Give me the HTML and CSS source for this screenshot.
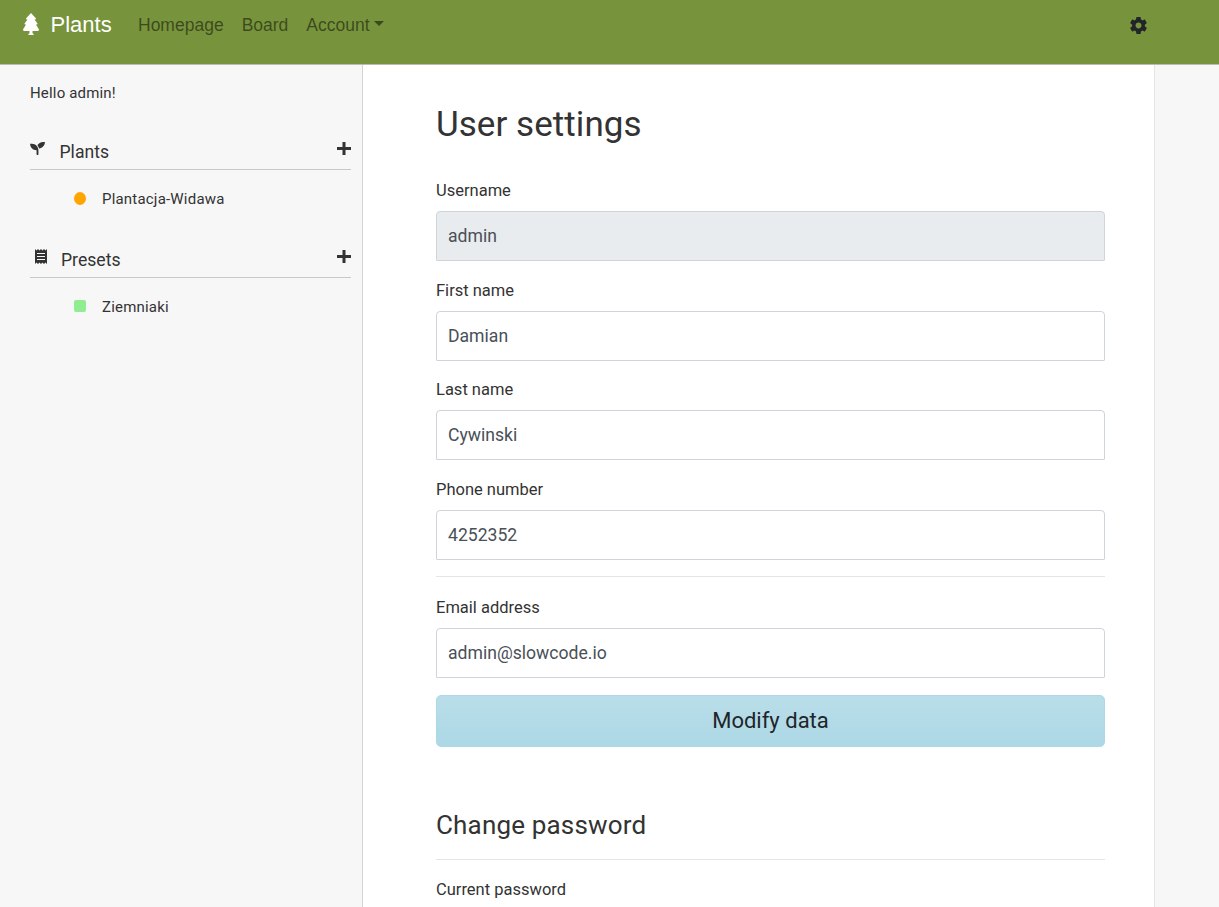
FILE: index.html
```html
<!DOCTYPE html>
<html lang="en">
<head>
<meta charset="utf-8">
<title>Plants</title>
<link rel="stylesheet" href="styles.css">
</head>
<body>
<header class="navbar">
  <a class="brand"><svg class="tree" viewBox="0 0 16 22"><path d="M8 0 L13 5.500 Q13.300 6.500 12 6.500 H11.500 L14.500 10.500 Q14.800 11.500 13.500 11.500 H13 L16 16.500 Q16 18 14.500 18 H9.500 V20 L11 22 H5 L6.500 20 V18 H1.500 Q0 18 0 16.500 L3 11.500 H2.500 Q1.200 11.500 1.500 10.500 L4.500 6.500 H4 Q2.700 6.500 3 5.500 Z"/></svg><span>Plants</span></a>
  <nav class="links"><a>Homepage</a><a>Board</a><a class="dropdown">Account<i class="caret"></i></a></nav>
  <svg class="gear" viewBox="2 2 20 20"><path d="M19.430 12.980c.040-.320.070-.640.070-.980s-.030-.660-.070-.980l2.110-1.650c.190-.150.240-.420.120-.640l-2-3.460c-.120-.220-.390-.300-.610-.220l-2.490 1c-.520-.400-1.080-.730-1.690-.980l-.380-2.650C14.460 2.180 14.250 2 14 2h-4c-.250 0-.460.180-.490.420l-.380 2.650c-.610.250-1.170.590-1.690.980l-2.490-1c-.230-.090-.490 0-.610.220l-2 3.460c-.130.220-.070.490.120.640l2.110 1.650c-.040.320-.070.650-.070.980s.030.660.070.980l-2.110 1.650c-.190.150-.240.420-.120.640l2 3.460c.120.220.390.300.610.220l2.490-1c.520.400 1.080.730 1.690.980l.380 2.650c.030.240.240.420.490.420h4c.250 0 .460-.180.490-.420l.380-2.650c.610-.250 1.170-.590 1.690-.980l2.490 1c.230.090.490 0 .610-.220l2-3.460c.120-.220.070-.490-.120-.640l-2.110-1.650zM12 15.500c-1.930 0-3.500-1.570-3.500-3.500s1.570-3.500 3.500-3.500 3.500 1.570 3.500 3.500-1.570 3.500-3.500 3.500z"/></svg>
</header>
<div class="layout">
  <aside class="sidebar">
    <p class="hello">Hello admin!</p>
    <section class="group">
      <div class="group-head">
        <svg class="seedling" viewBox="0 32 512 448"><path d="M64 96H0c0 123.700 100.300 224 224 224v144c0 8.800 7.200 16 16 16h32c8.800 0 16-7.200 16-16V320C288 196.300 187.700 96 64 96zm384-64c-84.200 0-157.400 46.500-195.700 115.200 27.700 30.200 48.200 66.900 59 107.600C424 243.100 512 147.900 512 32h-64z"/></svg>
        <span class="group-name">Plants</span>
        <svg class="plus" viewBox="0 0 14 13"><path d="M5.500 0h3v5H14v3H8.500v5h-3V8H0V5h5.500z"/></svg>
      </div>
      <div class="entry"><i class="dot"></i><span>Plantacja-Widawa</span></div>
    </section>
    <section class="group">
      <div class="group-head">
        <svg class="receipt" viewBox="0 0 12 15"><path fill-rule="evenodd" d="M0 0 L1.500 1.400 L3 0 L4.500 1.400 L6 0 L7.500 1.400 L9 0 L10.500 1.400 L12 0 V15 L10.500 13.600 L9 15 L7.500 13.600 L6 15 L4.500 13.600 L3 15 L1.500 13.600 L0 15Z M2 4 V5 H10 V4Z M2 7 V8 H10 V7Z M2 10 V11 H10 V10Z"/></svg>
        <span class="group-name">Presets</span>
        <svg class="plus" viewBox="0 0 14 13"><path d="M5.500 0h3v5H14v3H8.500v5h-3V8H0V5h5.500z"/></svg>
      </div>
      <div class="entry"><i class="dot square"></i><span>Ziemniaki</span></div>
    </section>
  </aside>
  <main class="content">
    <h1>User settings</h1>
    <form>
      <div class="field"><label>Username</label><input type="text" value="admin" disabled></div>
      <div class="field"><label>First name</label><input type="text" value="Damian"></div>
      <div class="field"><label>Last name</label><input type="text" value="Cywinski"></div>
      <div class="field before-rule"><label>Phone number</label><input type="text" value="4252352"></div>
      <hr>
      <div class="field before-button"><label>Email address</label><input type="text" value="admin@slowcode.io"></div>
      <button type="button">Modify data</button>
    </form>
    <h2>Change password</h2>
    <hr>
    <div class="field"><label>Current password</label></div>
  </main>
</div>
</body>
</html>
```
FILE: styles.css
```css
* { box-sizing: border-box; }
html, body { height: 100%; }
body {
  margin: 0;
  background: #f7f7f7;
  color: #212529;
  font-family: Roboto, sans-serif;
  overflow: hidden;
  display: flex;
  flex-direction: column;
}
.navbar {
  flex: none;
  display: flex;
  align-items: flex-start;
  height: 65px;
  padding: 0 72.5px 0 23px;
  background: #77933c;
  border-bottom: 1px solid #b9bcb3;
  font-family: "Liberation Sans", Arial, sans-serif;
}
.brand { display: flex; color: #fff; font-size: 22px; line-height: 49px; width: 115px; }
.tree { width: 16px; height: 22px; margin: 13px 11.5px 0 0; fill: #fff; }
.links { display: flex; gap: 18px; color: rgba(0, 0, 0, 0.5); font-size: 17.5px; line-height: 50px; }
.dropdown { display: flex; }
.caret {
  flex: none;
  width: 0;
  height: 0;
  margin: 21px 0 0 4px;
  border: solid transparent;
  border-width: 5px 5.5px 0;
  border-top-color: rgba(0, 0, 0, 0.5);
}
.gear { width: 17px; height: 17px; margin: 17px 0 0 auto; fill: #212529; }
.layout { flex: 1; min-height: 0; display: flex; }
.sidebar { width: 363px; padding: 0 11px 0 30px; border-right: 1px solid #d3d3d3; }
.hello { margin: 18px 0 0; font-size: 15px; line-height: 20px; letter-spacing: 0.17px; color: #333; }
.group { margin-bottom: 9px; }
.hello + .group { margin-top: 33px; }
.group-head { display: flex; align-items: flex-start; height: 34px; border-bottom: 1px solid #c8c8c8; }
.group-name { font-size: 17.6px; line-height: 32px; color: #333; }
.seedling { width: 15px; height: 13px; margin: 6px 14.5px 0 0; fill: #333; }
.receipt { width: 12px; height: 15px; margin: 5px 14px 0 5px; fill: #333; }
.plus { width: 14px; height: 13px; margin: 6px 0 0 auto; fill: #333; }
.entry { display: flex; align-items: center; height: 58px; margin-bottom: 16px; padding-left: 44px; font-size: 15px; letter-spacing: 0.2px; color: #333; }
.dot { width: 12px; height: 13px; margin: 0 16px 1px 0; border-radius: 50%; background: orange; }
.square { height: 12px; margin-bottom: 2px; border-radius: 2px; background: lightgreen; }
.content { width: 792px; padding: 36px 49px 0 73px; background: #fff; border-right: 1px solid #e4e4e4; }
h1 { margin: 0 0 30px; font-size: 35px; line-height: 48px; font-weight: 400; letter-spacing: 0.05px; color: #333; }
h2 { margin: 64px 0 19px; font-size: 26px; line-height: 29px; font-weight: 400; letter-spacing: 0.17px; color: #333; }
.field { margin-bottom: 17.6px; }
.before-rule { margin-bottom: 16.6px; }
.before-button { margin-bottom: 17.2px; }
hr + .field { margin-top: 18.2px; }
label { display: block; margin-bottom: 8px; font-size: 16.5px; line-height: 24px; color: #333; }
input {
  display: block;
  width: 100%;
  height: 50px;
  padding: 0 11px;
  border: 1px solid #ced4da;
  border-radius: 4px 4px 1px 1px;
  background: #fff;
  color: #495057;
  font: 17.6px Roboto, sans-serif;
}
input:disabled { background: #e9ecef; opacity: 1; }
hr { margin: 0; border: 0; border-top: 1px solid #e5e5e5; }
button {
  display: block;
  width: 100%;
  height: 52px;
  padding: 0 0 1px;
  border: 1px solid #add8e6;
  border-radius: 5px;
  background: linear-gradient(180deg, #b9dee9, #add8e6);
  color: #212529;
  font: 22px Roboto, sans-serif;
}
```
